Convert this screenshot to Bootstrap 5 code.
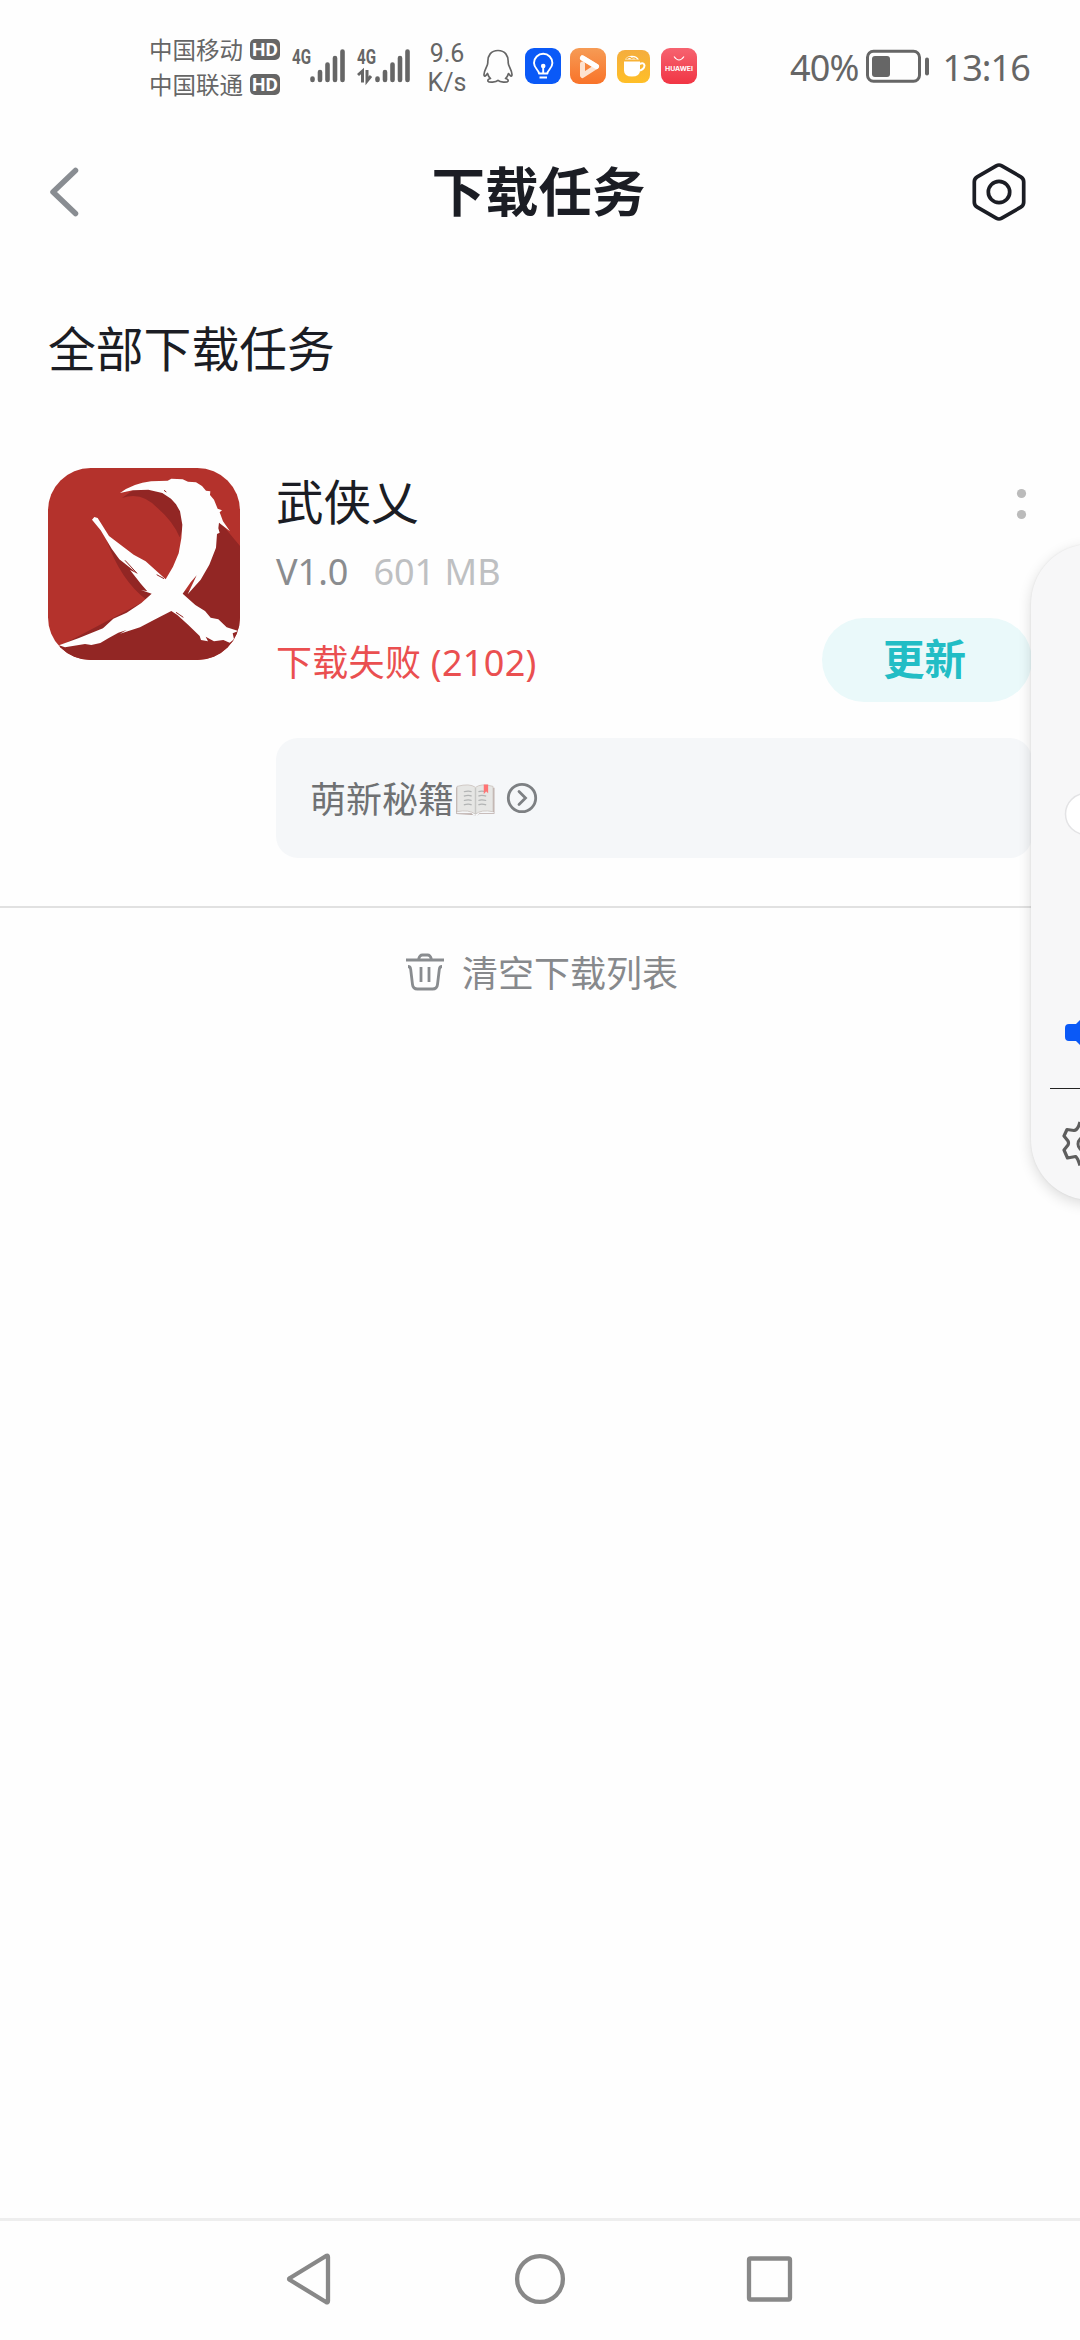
<!DOCTYPE html>
<html lang="zh-CN">
<head>
<meta charset="utf-8">
<meta name="viewport" content="width=device-width, initial-scale=1">
<title>下载任务</title>
<link href="https://cdn.jsdelivr.net/npm/bootstrap@5.3.0/dist/css/bootstrap.min.css" rel="stylesheet">
<style>
body{font-family:"Noto Sans","Noto Sans CJK SC",sans-serif;background:#fefefe;color:#1b1d24;overflow:hidden}
svg{display:block;flex:none;overflow:visible}
.screen{width:1080px;height:2340px}
.statusbar{height:132px;color:#666;padding:0 50px 0 149px}
.carriers{font-size:23.5px;line-height:35px;padding-top:32px;font-family:"Noto Sans CJK SC",sans-serif;font-weight:400;width:131px}
.carriers span{white-space:nowrap}
.hd-tag{background:#666;color:#fff;width:30px;height:21px;border-radius:5px;font:700 19px/21px Roboto,sans-serif;text-align:center}
.signals{margin:45px 0 0 12px;gap:11px}
.net4g{font:700 20px Roboto,sans-serif;fill:#666}
.speed{font:400 25px/29px Roboto,sans-serif;text-align:center;margin:39px 0 0 16px;width:40px}
.trayicons{margin:48px 0 0 16px}
.clock{font-size:36px;line-height:48px;margin-top:44px;letter-spacing:-.9px}
.titlebar{height:120px;padding:0 52px 0 48px}
.titlebar h1{font-size:53.5px;line-height:64px;font-weight:700;margin:0 0 0 1px}
.section-title{font-size:47.8px;line-height:64px;margin:0;padding:65px 48px 0;height:216px;font-weight:400}
.task{padding:0 48px 0 48px;gap:36px;height:438px}
.appname{font-size:47.5px;line-height:64px;font-weight:400;margin:2px 0 0}
.meta{font-size:36px;line-height:48px;color:#8a8c8f;margin-top:14px}
.meta .size{color:#bec0c2;margin-left:25px}
.fail{font-size:36px;line-height:48px;color:#ea4f50;padding-top:5px;letter-spacing:.3px}
.btn-update{--bs-btn-bg:#eaf9fa;--bs-btn-color:#22bdc5;--bs-btn-border-color:transparent;width:210px;height:84px;border-radius:42px;font-size:41.5px;line-height:60px;font-weight:700;padding:0 5px 2px 0;border:0}
.tip{margin-top:36px;height:120px;border-radius:22px;background:#f5f7f9;color:#6f7173;font-size:36px;padding-left:34px}
.tip span{padding-top:3px}
.clearlist{border-top:2px solid #e1e1e1;height:132px;color:#87898c;font-size:36px;gap:18px;padding-left:4px}
.clearlist span{padding-top:2px}
.sysnav{height:122px;border-top:3px solid #eee;padding-bottom:3px}
.volpanel{left:1031px;top:544px;width:120px;height:656px;border-radius:64px;background:#f7f7f8;box-shadow:0 4px 14px rgba(0,0,0,.14),0 0 2px rgba(0,0,0,.08)}
</style>
</head>
<body>
<div class="screen position-relative overflow-hidden d-flex flex-column">
  <header class="statusbar d-flex align-items-start">
    <div class="carriers">
      <div class="d-flex align-items-center justify-content-between"><span>中国移动</span><b class="hd-tag">HD</b></div>
      <div class="d-flex align-items-center justify-content-between"><span>中国联通</span><b class="hd-tag">HD</b></div>
    </div>
    <div class="signals d-flex">
      <svg width="54" height="40" viewBox="0 0 54 40"><text class="net4g" x="0" y="19" textLength="19" lengthAdjust="spacingAndGlyphs">4G</text><path d="M20.500 33.500v1.500M28 27v8M35.500 19.500v15.500M43 13v22M50.500 6.500v28.500" stroke="#666" stroke-width="4.600" stroke-linecap="round"/></svg>
      <svg width="54" height="40" viewBox="0 0 54 40"><text class="net4g" x="0" y="19" textLength="19" lengthAdjust="spacingAndGlyphs">4G</text><path d="M20.500 33.500v1.500M28 27v8M35.500 19.500v15.500M43 13v22M50.500 6.500v28.500" stroke="#666" stroke-width="4.600" stroke-linecap="round"/><path d="M1 30l4.500-4v11.500M10 25v11l4-5" stroke="#666" stroke-width="3" fill="none"/></svg>
    </div>
    <div class="speed">9.6<br>K/s</div>
    <div class="trayicons d-flex">
      <svg width="30" height="36" viewBox="0 0 30 36" fill="none" stroke="#666" stroke-width="1.700" stroke-linejoin="round"><path d="M15 2.500C8 2.500 4.500 7.500 4.800 14.500 5 18 1 22 1 26.500c0 2.500 1.500 2 3.500-1 .5 2 1.500 3.500 3 5-2 .5-3 1.500-2.500 2.700 1 1.500 8 1 10-.8 2 1.800 9 2.300 10 .8.500-1.200-.5-2.200-2.500-2.700 1.500-1.500 2.500-3 3-5 2 3 3.500 3.500 3.500 1C29 22 25 18 25.200 14.500 25.500 7.500 22 2.500 15 2.500z"/></svg>
      <svg style="margin:0 9px 0 12px" width="36" height="36" viewBox="0 0 36 36" fill="none"><rect width="36" height="36" rx="9" fill="#0a59f7"/><g stroke="#fff" stroke-width="1.900"><path d="M14 25.500c0-3.500-5-5-5-10.500a9.200 9.200 0 0 1 18.400 0c0 5.500-5 7-5 10.500z" stroke-linejoin="round"/><path d="M14.500 29.500h7.500M18.200 19v6"/></g><circle cx="18.200" cy="18" r="2.300" fill="#fff"/></svg>
      <svg width="36" height="36" viewBox="0 0 36 36"><defs><linearGradient id="og" x2="0" y2="1"><stop stop-color="#f69b55"/><stop offset="1" stop-color="#f97329"/></linearGradient></defs><rect width="36" height="36" rx="9" fill="url(#og)"/><path d="M12.500 10L26.500 18.500 12.500 27.500V16" fill="none" stroke="#fde2d0" stroke-width="5" stroke-linejoin="round" stroke-linecap="round"/><path d="M12.500 10L26.500 18.500" stroke="#fff" stroke-width="5" stroke-linecap="round"/></svg>
      <svg style="margin:2px 11px 0" width="33" height="33" viewBox="0 0 33 33"><defs><linearGradient id="yg" x2="0" y2="1"><stop stop-color="#f4ad3e"/><stop offset="1" stop-color="#ffbf27"/></linearGradient></defs><rect width="33" height="33" rx="8" fill="url(#yg)"/><path d="M8 9.500a7.500 6 0 0 1 14 0zM7 11.500h16v9q0 6-8 6t-8-6z" fill="#fff"/><path d="M22.500 14q4.500-2 5 1.500c0 3-3 5-6 5" fill="none" stroke="#fff" stroke-width="2"/><path d="M9.500 9q3-3 5-.5 3-1.500 5 .8" fill="none" stroke="#f6af3a" stroke-width="1.200"/></svg>
      <svg width="36" height="36" viewBox="0 0 36 36"><defs><linearGradient id="rg" x2="0" y2="1"><stop stop-color="#f66370"/><stop offset="1" stop-color="#f13544"/></linearGradient></defs><rect width="36" height="36" rx="9" fill="url(#rg)"/><path d="M13 8.500q5 7 10 0" fill="none" stroke="#fff" stroke-width="1.100"/><text x="4" y="23.300" font-family="Inter" font-weight="700" font-size="6.200" fill="#fff" textLength="28" lengthAdjust="spacingAndGlyphs">HUAWEI</text></svg>
    </div>
    <div class="clock d-flex ms-auto">
      <span>40%</span>
      <svg class="mx-2" width="64" height="48" viewBox="0 0 64 48"><rect x="1.500" y="7.300" width="52" height="30" rx="6" fill="none" stroke="#666" stroke-width="3"/><rect x="6" y="12" width="18" height="21" rx="3" fill="#666"/><path d="M61 15.500v14" stroke="#666" stroke-width="4" stroke-linecap="round"/></svg>
      <span class="ps-1">13:16</span>
    </div>
  </header>

  <nav class="titlebar d-flex align-items-center justify-content-between">
    <svg width="58" height="58" viewBox="0 0 58 58"><path d="M27.500 7.500L5 29l22.500 21.500" fill="none" stroke="#898d92" stroke-width="5.500" stroke-linecap="round" stroke-linejoin="round"/></svg>
    <h1>下载任务</h1>
    <svg width="58" height="60" viewBox="0 0 58 60" fill="none" stroke="#1b1d24" stroke-width="3.700"><path d="M26.200 3.800q2.800-1.600 5.600 0l19 11q2.900 1.700 2.900 5v20.400q0 3.300-2.900 5l-19 11q-2.800 1.600-5.600 0l-19-11q-2.900-1.700-2.900-5V19.800q0-3.300 2.900-5z"/><circle cx="29" cy="30" r="10.700"/></svg>
  </nav>

  <main class="flex-grow-1">
    <h2 class="section-title">全部下载任务</h2>
    <section class="task d-flex align-items-start">
      <svg width="192" height="192" viewBox="54 54 576 576">
        <defs><clipPath id="tile"><rect x="54" y="54" width="576" height="576" rx="128"/></clipPath></defs>
        <g clip-path="url(#tile)">
          <path fill="#b4322c" d="M54 54h576v576H54z"/>
          <path fill="#922624" d="M90 588L350 450Q270 390 228 265L370 400 420 430 480 420 565 210 640 300V640H54z"/>
          <path fill="#922624" d="M276 144Q335 122 385 176 430 215 449 262L480 180 450 130 390 118 310 120z"/>
          <path fill="#fefefe" d="M270 129Q310 100 363 94L413 92 424 86 458 88 474 95 498 97 516 108 528 122 541 124 540 135 552 149 563 176 576 181 569 187 579 214 600 244 567 218 565 235 569 248 561 252 558 293 538 344 512 389 473 433 500 376 482 397 458 431 496 465 525 483 542 503 565 508 590 532 625 543 608 550 612 568 599 578 580 570 552 574 527 560 534 574 513 570 509 558 475 525 442 495 424 483 383 504 330 532 270 551 290 540 265 548 235 565 211 579 184 585 165 582 105 592 87 586 145 565 219 535 250 506 290 488 334 459 365 431 333 420 352 424 333 402 300 360 323 371 268 328 245 296 212 241 186 209 193 201 203 204 237 258 311 314 347 334 407 388 429 350 446 310 454 265 457 224 450 184 438 163 423 146 397 129 355 119 308 121z"/>
          <path d="M330 537Q295 557 260 564M438 487Q450 495 460 502M402 121l7 5M285 331l36 39M380 374l22 12" fill="none" stroke="#922624" stroke-width="3"/>
        </g>
      </svg>
      <div class="flex-grow-1">
        <div class="d-flex justify-content-between">
          <h3 class="appname">武侠乂</h3>
          <svg width="21" height="64" viewBox="0 0 21 64" fill="#bbb"><circle cx="10.500" cy="25.500" r="4.600"/><circle cx="10.500" cy="46.500" r="4.600"/></svg>
        </div>
        <div class="meta">V1.0<span class="size">601 MB</span></div>
        <div class="d-flex align-items-center justify-content-between" style="margin-top:22px">
          <span class="fail">下载失败 (2102)</span>
          <button type="button" class="btn btn-update">更新</button>
        </div>
        <div class="tip d-flex align-items-center">
          <span>萌新秘籍</span>
          <svg style="margin:4px 0 0 1px" width="41" height="35" viewBox="0 0 42 36"><path d="M1 5L3 3v26l-2 2 16 0q2 3 4 3t4-3h15.500L38.500 29V5l2 0v27H25q-3 3-6 1L1 32z" fill="#b9aaa6"/><path d="M2 3.500Q15 0 21 4.500 27 0 39 3.500V29.500Q27 27 21 32 14 27 2 29.500z" fill="#e6e6e4" stroke="#cfc8c4" stroke-width="1"/><path d="M21 5v27" stroke="#c8c8c6" stroke-width="1.500"/><path d="M9 9q5-1.500 8 0M9 13.500q5-1.500 8 0M9 18q5-1.500 8 0M9 22.500q5-1.500 8 0M24 9q3-1.500 8 0M24 13.500q3-1.500 8 0M24 18q3-1.500 8 0M24 22.500q3-1.500 8 0" stroke="#b2b4b4" stroke-width="1.300" fill="none"/><path d="M29.500 1.500h4.500v9l-2.200-2-2.300 3z" fill="#ff7474"/></svg>
          <svg style="margin-left:10px" width="32" height="34" viewBox="0 0 32 34" fill="none" stroke="#7d8083" stroke-width="2.800"><circle cx="16" cy="17" r="13.700"/><path d="M13 10.500l6.500 6.500-6.500 6.500" stroke-linecap="round"/></svg>
        </div>
      </div>
    </section>
    <div class="clearlist d-flex align-items-center justify-content-center">
      <svg width="38" height="40" viewBox="0 0 38 40" fill="none" stroke="#898c8f" stroke-width="2.800" stroke-linejoin="round"><path d="M0 7h38M12.500 6.500q1-4.500 4-4.500h5q3 0 4 4.500M2 13.500q2.500 0 2.700 3l1.800 15q.5 4.500 5 4.500h15q4.500 0 5-4.500l1.800-15q.2-3 2.700-3M15 14v15M23 14v15"/></svg>
      <span>清空下载列表</span>
    </div>
  </main>

  <footer class="sysnav d-flex justify-content-center align-items-center">
    <svg width="506" height="60" viewBox="287 2249 506 60" fill="none" stroke="#888" stroke-width="4.300" stroke-linejoin="round"><path d="M328 2257v44q0 2-2 1l-36-22q-2-1 0-2l36-22q2-1 2 1z"/><circle cx="540" cy="2279" r="22.900"/><rect x="749" y="2258.500" width="41" height="41" rx="1.500"/></svg>
  </footer>

  <aside class="volpanel position-absolute">
    <svg width="120" height="656" viewBox="1031 544 120 656" fill="none"><circle cx="1086" cy="814" r="20.500" fill="#fff" stroke="#e3e3e5" stroke-width="1.500"/><path d="M1065 1028q0-4 4-4h7l6-6v29l-6-6h-7q-4 0-4-4z" fill="#0a59f7"/><path d="M1050 1088.500h40" stroke="#222" stroke-width="1"/><path d="M1080 1122q-2 8-6 8.500l-7-1-3 6.500 4 5q1 2 0 4l-4 5 3.500 8 8-1.500q2 1 4.500 9" stroke="#5e5e5e" stroke-width="3.200" stroke-linejoin="round"/><circle cx="1085" cy="1144" r="7" stroke="#5e5e5e" stroke-width="3"/></svg>
  </aside>
</div>
<script src="https://cdn.jsdelivr.net/npm/bootstrap@5.3.0/dist/js/bootstrap.bundle.min.js"></script>
</body>
</html>
